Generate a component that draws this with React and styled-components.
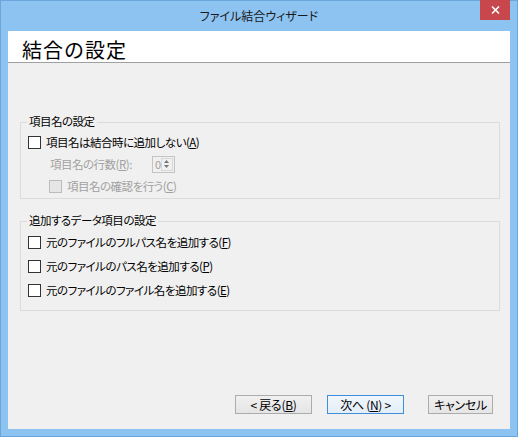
import React from "react";
import styled, { createGlobalStyle } from "styled-components";

const GlobalStyle = createGlobalStyle`
  html, body {
    margin: 0;
    padding: 0;
    background: #ffffff;
  }
  body {
    font-family: "Noto Sans CJK JP", "Noto Sans", sans-serif;
    font-size: 12px;
    font-feature-settings: "palt";
    color: #000;
  }
`;

const Window = styled.div`
  width: 518px;
  height: 437px;
  box-sizing: border-box;
  background: #8dc3f1;
  border: 1px solid #6aa6dc;
  display: flex;
  flex-direction: column;
  padding: 0 7px 7px 7px;
`;

const TitleBar = styled.div`
  height: 30px;
  display: grid;
  grid-template-columns: 30px 1fr 30px;
  align-items: start;
`;

const Title = styled.div`
  grid-column: 2;
  text-align: center;
  line-height: 30px;
  font-size: 12px;
  color: #1a1a1a;
`;

const CloseButton = styled.div`
  grid-column: 3;
  width: 30px;
  height: 20px;
  margin-top: -1px;
  background: #c7474c;
  display: flex;
  align-items: center;
  justify-content: center;
`;

const Client = styled.div`
  flex: 1;
  background: #f0f0f0;
  display: flex;
  flex-direction: column;
`;

const Header = styled.div`
  height: 32px;
  box-sizing: border-box;
  background: #ffffff;
  border-bottom: 1px solid #a0a0a0;
  padding: 7px 0 0 14px;
  font-size: 20px;
  line-height: 24px;
  letter-spacing: 1px;
  font-feature-settings: normal;
`;

const Body = styled.div`
  flex: 1;
  padding: 59px 10px 0 12px;
  display: flex;
  flex-direction: column;
  gap: 22px;
  font-size: 11.5px;
  letter-spacing: -0.5px;
`;

const Group = styled.div`
  position: relative;
  border: 1px solid #dcdcdc;
  padding: ${(p) => p.$pad};
  display: flex;
  flex-direction: column;
`;

const Legend = styled.span`
  position: absolute;
  top: -10px;
  left: 6px;
  padding: 0 2px;
  background: #f0f0f0;
  line-height: 16px;
`;

const Row = styled.div`
  height: ${(p) => p.$h}px;
  display: flex;
  align-items: center;
  padding-left: ${(p) => p.$indent || 0}px;
  color: ${(p) => (p.$disabled ? "#a0a0a0" : "#000")};
`;

const Box = styled.span`
  width: 11px;
  height: 11px;
  border: 1px solid ${(p) => (p.$disabled ? "#bcbcbc" : "#333333")};
  background: ${(p) => (p.$disabled ? "#e6e6e6" : "#ffffff")};
  margin-right: 5px;
  flex-shrink: 0;
`;

const Mn = styled.u`
  text-underline-offset: 1px;
`;

const Spinner = styled.div`
  margin-left: 20px;
  width: 21px;
  height: 15px;
  border: 1px solid #c4c4c4;
  background: #f0f0f0;
  display: flex;
  align-items: stretch;
`;

const SpinValue = styled.span`
  flex: 1;
  padding-left: 2px;
  line-height: 15px;
  font-size: 11px;
  color: #a0a0a0;
`;

const SpinArrows = styled.span`
  width: 10px;
  margin: 1px 1px 1px 0;
  border: 1px solid #d8d8d8;
  display: flex;
  flex-direction: column;
  align-items: center;
  justify-content: center;
  gap: 2px;
`;

const Footer = styled.div`
  display: flex;
  justify-content: flex-end;
  align-items: center;
  padding: 0 17px 15px 0;
`;

const Button = styled.button`
  width: ${(p) => p.$w}px;
  height: 19px;
  margin-left: ${(p) => p.$gap}px;
  padding: 0;
  box-sizing: border-box;
  font-family: "Noto Sans CJK JP", "Noto Sans", sans-serif;
  font-size: 12px;
  font-feature-settings: "palt";
  letter-spacing: -0.3px;
  line-height: 16px;
  color: #000;
  border: 1px solid ${(p) => (p.$default ? "#3c8fd8" : "#acacac")};
  background: ${(p) =>
    p.$default
      ? "linear-gradient(#f0f6fb, #e3eef8)"
      : "linear-gradient(#f0f0f0, #e5e5e5)"};
`;

const Check = ({ disabled, children }) => (
  <>
    <Box $disabled={disabled} />
    <span>{children}</span>
  </>
);

export default function App() {
  return (
    <>
      <GlobalStyle />
      <Window>
        <TitleBar>
          <Title>ファイル結合ウィザード</Title>
          <CloseButton>
            <svg width="9" height="8" viewBox="0 0 9 8">
              <path d="M1 0.5 L8 7.5 M8 0.5 L1 7.5" stroke="#fff" strokeWidth="1.6" />
            </svg>
          </CloseButton>
        </TitleBar>
        <Client>
          <Header>結合の設定</Header>
          <Body>
            <Group $pad="8px 0 1px 7px">
              <Legend>項目名の設定</Legend>
              <Row $h={22}>
                <Check>
                  項目名は結合時に追加しない(<Mn>A</Mn>)
                </Check>
              </Row>
              <Row $h={22} $indent={22} $disabled>
                <span>
                  項目名の行数(<Mn>R</Mn>):
                </span>
                <Spinner>
                  <SpinValue>0</SpinValue>
                  <SpinArrows>
                    <svg width="5" height="3" viewBox="0 0 5 3">
                      <path d="M0 3 L2.5 0 L5 3 Z" fill="#777" />
                    </svg>
                    <svg width="5" height="3" viewBox="0 0 5 3">
                      <path d="M0 0 L2.5 3 L5 0 Z" fill="#777" />
                    </svg>
                  </SpinArrows>
                </Spinner>
              </Row>
              <Row $h={22} $indent={21} $disabled>
                <Check disabled>
                  項目名の確認を行う(<Mn>C</Mn>)
                </Check>
              </Row>
            </Group>
            <Group $pad="8px 0 8px 7px">
              <Legend>追加するデータ項目の設定</Legend>
              <Row $h={24}>
                <Check>
                  元のファイルのフルパス名を追加する(<Mn>F</Mn>)
                </Check>
              </Row>
              <Row $h={24}>
                <Check>
                  元のファイルのパス名を追加する(<Mn>P</Mn>)
                </Check>
              </Row>
              <Row $h={24}>
                <Check>
                  元のファイルのファイル名を追加する(<Mn>E</Mn>)
                </Check>
              </Row>
            </Group>
          </Body>
          <Footer>
            <Button $w={77} $gap={0}>
              &lt; 戻る(<Mn>B</Mn>)
            </Button>
            <Button $w={77} $gap={15} $default>
              次へ (<Mn>N</Mn>) &gt;
            </Button>
            <Button $w={65} $gap={24}>
              キャンセル
            </Button>
          </Footer>
        </Client>
      </Window>
    </>
  );
}
